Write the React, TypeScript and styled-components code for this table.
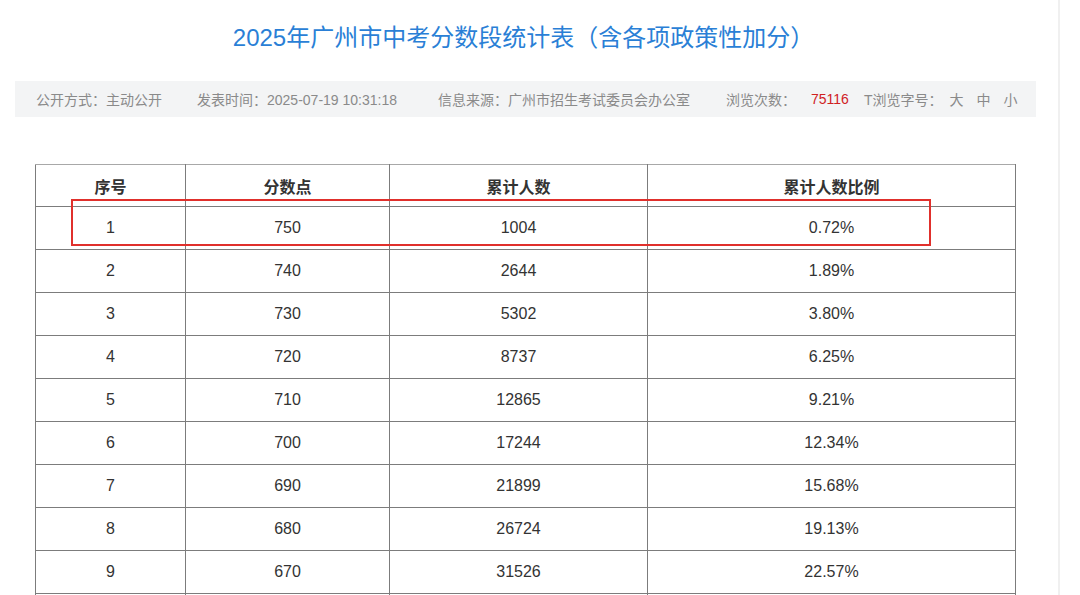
import React from "react";
import styled, { createGlobalStyle } from "styled-components";

const GlobalStyle = createGlobalStyle`
  html, body {
    margin: 0;
    padding: 0;
    background: #ffffff;
  }
  body {
    font-family: "Liberation Sans", "Noto Sans CJK SC", sans-serif;
    overflow: hidden;
  }
`;

const Page = styled.div`
  display: flex;
  width: 1080px;
  height: 595px;
  overflow: hidden;
`;

const Main = styled.div`
  width: 1021px;
  padding: 0 22px 0 15px;
  flex: none;
`;

const Side = styled.div`
  flex: 1;
  border-left: 2px solid #f0f0f0;
`;

const Title = styled.h1`
  margin: 0 0 5px;
  height: 76px;
  line-height: 76px;
  text-align: center;
  font-size: 24px;
  font-weight: 400;
  color: #2a7fd6;
  font-family: "Liberation Sans", "Noto Sans CJK SC", sans-serif;
  padding-right: 4px;
`;

const MetaBar = styled.div`
  display: flex;
  align-items: center;
  height: 36px;
  padding-left: 21px;
  background: #f3f4f5;
  font-size: 14px;
  color: #8a8a8a;
  gap: 35px;
  white-space: nowrap;
`;

const MetaItem = styled.span<{ $extra?: number }>`
  margin-right: ${(p) => p.$extra ?? 0}px;
`;

const MetaGroup = styled.div<{ $gap?: number }>`
  display: flex;
  align-items: center;
  gap: ${(p) => p.$gap ?? 0}px;
`;

const Count = styled.span`
  color: #d0211f;
`;

const SizeOptions = styled.div`
  display: flex;
  gap: 13px;
  margin-left: -8px;
`;

const TableWrap = styled.div`
  position: relative;
  margin: 47px 21px 0 20px;
`;

const Table = styled.table`
  width: 980px;
  border-collapse: collapse;
  table-layout: fixed;
  color: #333333;
  font-size: 16px;
`;

const Th = styled.th`
  height: 41px;
  padding: 0;
  border: 1px solid #7c7c7c;
  border-top-color: #a8a8a8;
  font-weight: 700;
  text-align: center;
  vertical-align: middle;
`;

const Td = styled.td`
  height: 42px;
  padding: 0;
  border: 1px solid #7c7c7c;
  text-align: center;
  vertical-align: middle;
`;

const Highlight = styled.div`
  position: absolute;
  left: 36px;
  top: 35px;
  width: 856px;
  height: 43px;
  border: 2px solid #e0302c;
  pointer-events: none;
`;

const rows: [string, string, string, string][] = [
  ["1", "750", "1004", "0.72%"],
  ["2", "740", "2644", "1.89%"],
  ["3", "730", "5302", "3.80%"],
  ["4", "720", "8737", "6.25%"],
  ["5", "710", "12865", "9.21%"],
  ["6", "700", "17244", "12.34%"],
  ["7", "690", "21899", "15.68%"],
  ["8", "680", "26724", "19.13%"],
  ["9", "670", "31526", "22.57%"],
  ["", "", "", ""],
];

export default function App() {
  return (
    <>
      <GlobalStyle />
      <Page>
        <Main>
          <Title>2025年广州市中考分数段统计表（含各项政策性加分）</Title>
          <MetaBar>
            <MetaItem>公开方式：主动公开</MetaItem>
            <MetaItem $extra={6}>发表时间：2025-07-19 10:31:18</MetaItem>
            <MetaItem $extra={1}>信息来源：广州市招生考试委员会办公室</MetaItem>
            <MetaGroup $gap={15}>
              <span>浏览次数：</span>
              <Count>75116</Count>
              <span>T浏览字号：</span>
              <SizeOptions>
                <span>大</span>
                <span>中</span>
                <span>小</span>
              </SizeOptions>
            </MetaGroup>
          </MetaBar>
          <TableWrap>
            <Table>
              <colgroup>
                <col style={{ width: 150 }} />
                <col style={{ width: 204 }} />
                <col style={{ width: 258 }} />
                <col style={{ width: 368 }} />
              </colgroup>
              <thead>
                <tr>
                  <Th>序号</Th>
                  <Th>分数点</Th>
                  <Th>累计人数</Th>
                  <Th>累计人数比例</Th>
                </tr>
              </thead>
              <tbody>
                {rows.map((r, i) => (
                  <tr key={i}>
                    {r.map((c, j) => (
                      <Td key={j}>{c}</Td>
                    ))}
                  </tr>
                ))}
              </tbody>
            </Table>
            <Highlight />
          </TableWrap>
        </Main>
        <Side />
      </Page>
    </>
  );
}
